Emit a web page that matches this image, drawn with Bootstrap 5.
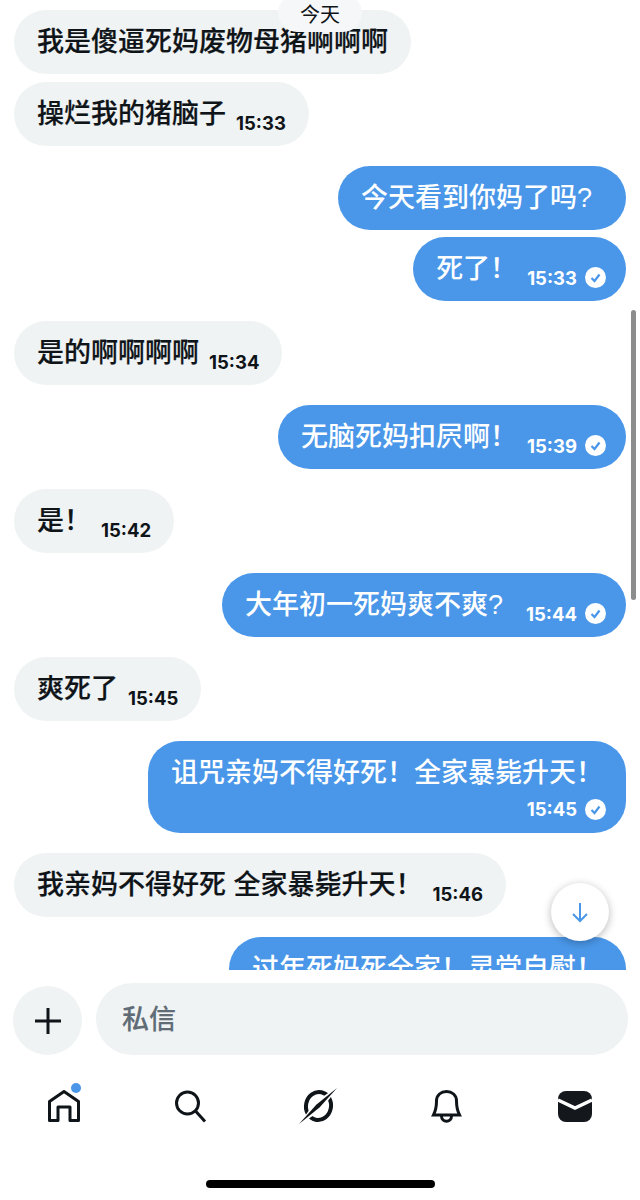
<!DOCTYPE html>
<html lang="zh-CN">
<head>
  <meta charset="UTF-8">
  <title>私信</title>
  <link href="https://cdn.jsdelivr.net/npm/bootstrap@5.3.3/dist/css/bootstrap.min.css" rel="stylesheet">
  <style>
    body { width: 640px; height: 1200px; overflow: hidden; background: #fff; color: #0f1419;
      font-family: "Liberation Sans", "Noto Sans CJK SC", sans-serif; }
    .hilo { height: 970px; padding: 10px 14px 0; overflow: hidden; }
    .burbuja { height: 64px; flex: none; border-radius: 32px; padding: 0 23px; font-size: 27px; font-weight: 500; line-height: 36px; }
    .burbuja.alta { height: 92px; border-radius: 32px; padding-top: 14px; }
    .recibido { background: #eff3f4; color: #0f1419; align-self: flex-start; -webkit-text-stroke: .2px currentColor; }
    .enviado { background: #4a97e9; color: #fff; align-self: flex-end; }
    .seguido { margin-top: 8px; }
    .pegado { margin-top: 7px; }
    .grupo { margin-top: 20px; }
    .pregunta { padding-right: 34px; }
    .texto { margin-top: -1px; white-space: nowrap; }
    .hora { font-family: Inter, "Liberation Sans", sans-serif; font-size: 18.5px; font-weight: 700; line-height: 22px; margin-top: 18px; margin-left: 10px; white-space: nowrap; -webkit-text-stroke: 0; }
    .enviado .hora { margin-left: 10px; }
    .enviado .hora.lejos { margin-left: 23px; }
    .enviado .visto { margin-top: 16px; margin-left: 8px; margin-right: -3px; flex: none; }
    .alta .pie { margin-top: 7px; }
    .alta .hora { margin: 0; }
    .alta .visto { margin-top: 0; }
    .fecha { position: absolute; top: -6px; left: 278px; width: 84px; height: 38px; border-radius: 19px; background: #f6f7f8; font-size: 20px; line-height: 42px; text-align: center; }
    .barra { position: absolute; left: 631px; top: 310px; width: 5px; height: 290px; border-radius: 3px; background: #8d8d8d; }
    .bajar { position: absolute; left: 551px; top: 883px; width: 58px; height: 58px; background: #fff; box-shadow: 0 2px 8px rgba(0,0,0,.28); }
    .redactar { height: 85px; padding: 13px 12px 0 13px; }
    .mas { width: 69px; height: 69px; margin-top: 3px; background: #eff3f4; flex: none; }
    .campo { height: 72px; margin-left: 14px; padding-left: 26px; padding-top: 2px; background: #eff3f4; color: #5f6b75; font-size: 27px; font-weight: 500; -webkit-text-stroke: .15px currentColor; }
    .pestanas { height: 120px; padding-top: 30px; }
    .pestana { width: 128px; }
    .pestana svg { overflow: visible; }
    .punto { position: absolute; left: 71px; top: 1083px; width: 10px; height: 10px; border-radius: 50%; background: #4a97e9; }
    .inicio { position: absolute; left: 206px; top: 1180px; width: 229px; height: 8px; border-radius: 4px; background: #000; }
  </style>
</head>
<body class="position-relative">
  <div class="hilo d-flex flex-column">
    <div class="burbuja recibido d-flex align-items-center"><span class="texto">我是傻逼死妈废物母猪啊啊啊</span></div>
    <div class="burbuja recibido seguido d-flex align-items-center"><span class="texto">操烂我的猪脑子</span><span class="hora">15:33</span></div>

    <div class="burbuja enviado pregunta grupo d-flex align-items-center"><span class="texto">今天看到你妈了吗?</span></div>
    <div class="burbuja enviado pegado d-flex align-items-center"><span class="texto">死了！</span><span class="hora">15:33</span>
      <svg class="visto" width="21" height="21" viewBox="0 0 21 21"><circle cx="10.5" cy="10.5" r="10.5" fill="#fff"/><path d="M6.5 11l3 3 5-6.5" fill="none" stroke="#4a97e9" stroke-width="2.2"/></svg></div>

    <div class="burbuja recibido grupo d-flex align-items-center"><span class="texto">是的啊啊啊啊</span><span class="hora">15:34</span></div>

    <div class="burbuja enviado grupo d-flex align-items-center"><span class="texto">无脑死妈扣屄啊！</span><span class="hora">15:39</span>
      <svg class="visto" width="21" height="21" viewBox="0 0 21 21"><circle cx="10.5" cy="10.5" r="10.5" fill="#fff"/><path d="M6.5 11l3 3 5-6.5" fill="none" stroke="#4a97e9" stroke-width="2.2"/></svg></div>

    <div class="burbuja recibido grupo d-flex align-items-center"><span class="texto">是！</span><span class="hora">15:42</span></div>

    <div class="burbuja enviado grupo d-flex align-items-center"><span class="texto">大年初一死妈爽不爽?</span><span class="hora lejos">15:44</span>
      <svg class="visto" width="21" height="21" viewBox="0 0 21 21"><circle cx="10.5" cy="10.5" r="10.5" fill="#fff"/><path d="M6.5 11l3 3 5-6.5" fill="none" stroke="#4a97e9" stroke-width="2.2"/></svg></div>

    <div class="burbuja recibido grupo d-flex align-items-center"><span class="texto">爽死了</span><span class="hora">15:45</span></div>

    <div class="burbuja alta enviado grupo">
      <div class="text-nowrap">诅咒亲妈不得好死！全家暴毙升天！</div>
      <div class="pie d-flex justify-content-end align-items-center"><span class="hora">15:45</span>
        <svg class="visto" width="21" height="21" viewBox="0 0 21 21"><circle cx="10.5" cy="10.5" r="10.5" fill="#fff"/><path d="M6.5 11l3 3 5-6.5" fill="none" stroke="#4a97e9" stroke-width="2.2"/></svg></div>
    </div>

    <div class="burbuja recibido grupo d-flex align-items-center"><span class="texto">我亲妈不得好死 全家暴毙升天！</span><span class="hora">15:46</span></div>

    <div class="burbuja alta enviado grupo"><div class="text-nowrap">过年死妈死全家！灵堂自慰！</div></div>
  </div>

  <div class="fecha">今天</div>
  <div class="barra"></div>
  <div class="bajar rounded-circle d-flex align-items-center justify-content-center">
    <svg width="20" height="22" viewBox="0 0 20 22" fill="none" stroke="#4a97e9" stroke-width="2"><path d="M10 2v18M3 13l7 7 7-7"/></svg>
  </div>

  <div class="redactar d-flex">
    <div class="mas rounded-circle d-flex align-items-center justify-content-center">
      <svg width="28" height="28" viewBox="0 0 28 28" stroke="#0f1419" stroke-width="3"><path d="M14 1v26M1 14h26"/></svg>
    </div>
    <div class="campo flex-grow-1 rounded-pill d-flex align-items-center">私信</div>
  </div>

  <nav class="pestanas d-flex">
    <div class="pestana d-flex justify-content-center">
      <svg width="40" height="40" viewBox="0 0 40 40" fill="none" stroke="#0f1419" stroke-width="3" stroke-linejoin="round"><path d="M5.500 35.500V16.500L20 6.500l14.500 10v19H26V22h-12v13.500z"/></svg>
    </div>
    <div class="pestana d-flex justify-content-center">
      <svg width="40" height="40" viewBox="0 0 40 40" fill="none" stroke="#0f1419" stroke-width="3"><circle cx="15.500" cy="18" r="11"/><path d="M23.500 26l9.500 10.500"/></svg>
    </div>
    <div class="pestana d-flex justify-content-center">
      <svg width="40" height="40" viewBox="0 0 40 40" fill="none"><ellipse cx="18.500" cy="21" rx="12.500" ry="14" transform="rotate(12 18.500 21)" stroke="#0f1419" stroke-width="4"/><path d="M40 0L21 25-3 42l18-25z" fill="#fff"/><path d="M37 3L19.500 22.500-1 39l17.500-19.500z" fill="#0f1419"/></svg>
    </div>
    <div class="pestana d-flex justify-content-center">
      <svg width="40" height="40" viewBox="0 0 40 40" fill="none" stroke="#0f1419" stroke-width="3"><path d="M5.500 30C8 25 8.500 22 8.500 16c0-6 4.500-9.500 10-9.500s10 3.500 10 9.500c0 6 .5 9 3 14z"/><path d="M13.500 31c0 7 10 7 10 0"/></svg>
    </div>
    <div class="pestana d-flex justify-content-center">
      <svg width="40" height="40" viewBox="0 0 40 40"><rect x="2" y="6" width="34" height="31" rx="8" fill="#14171c"/><path d="M2 15l17 8 17-8" fill="none" stroke="#fff" stroke-width="3.500"/></svg>
    </div>
  </nav>
  <div class="punto"></div>
  <div class="inicio"></div>

  <script src="https://cdn.jsdelivr.net/npm/bootstrap@5.3.3/dist/js/bootstrap.bundle.min.js"></script>
</body>
</html>
